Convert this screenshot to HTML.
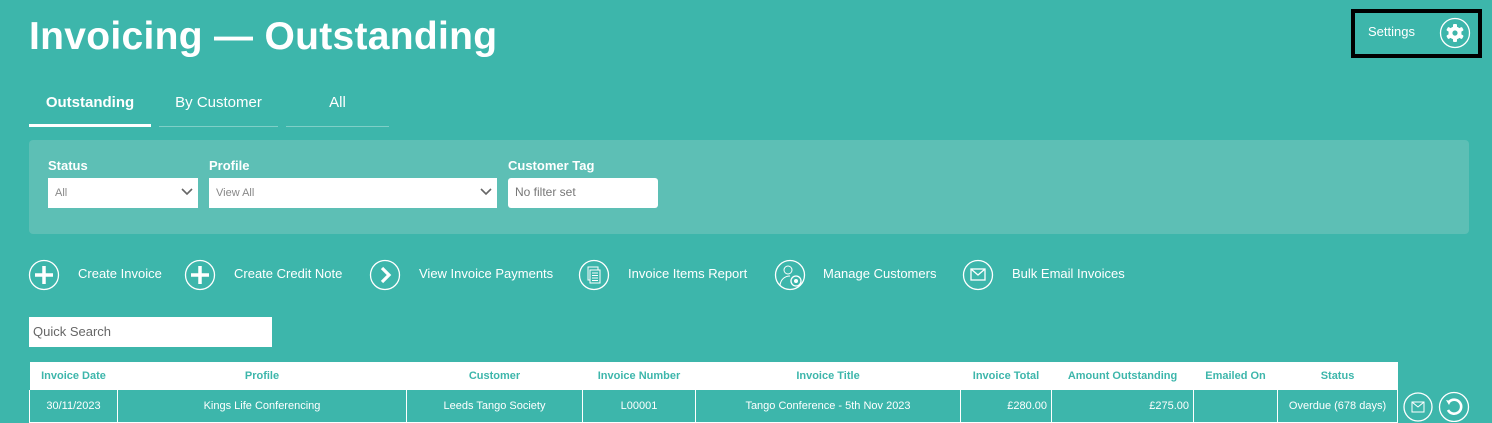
<!DOCTYPE html>
<html><head><meta charset="utf-8"><style>
*{box-sizing:border-box;margin:0;padding:0}
body{width:1492px;height:422px;overflow:hidden;background:#3db6ab;font-family:"Liberation Sans",sans-serif;color:#fff;position:relative}
.a{position:absolute}
h1{position:absolute;left:29px;top:15px;font-size:39px;font-weight:bold;letter-spacing:0.3px;color:#fff}
.tab{position:absolute;top:94px;font-size:15px;text-align:center;height:33px;border-bottom:1px solid #7fcfc7}
.panel{position:absolute;left:29px;top:140px;width:1440px;height:94px;background:#5dbfb5;border-radius:4px}
.lbl{position:absolute;top:158px;font-size:13px;font-weight:bold}
.sel{position:absolute;top:178px;height:30px;background:#fff;color:#888;font-size:11px;padding:9px 7px}
.sel svg{position:absolute;right:5px;top:10px}
.act{position:absolute;top:259px;height:30px;font-size:13px;line-height:30px}
.act svg{position:absolute;left:0;top:0}
.act span{position:absolute;white-space:nowrap}
table{position:absolute;left:29px;top:362px;border-collapse:collapse;font-size:11px}
th{background:#fff;color:#3db6ab;height:28px;font-weight:bold;border:none}
td{height:32px;border:1px solid #fff;border-top:none;text-align:center;padding:0 4px}
</style></head><body>
<h1>Invoicing — Outstanding</h1>
<div class="a" style="left:1351px;top:9px;width:131px;height:49px;border:4px solid #000"></div>
<div class="a" style="left:1368px;top:24px;font-size:13px">Settings</div>
<svg class="a" style="left:1439px;top:17px" width="32" height="32" viewBox="0 0 32 32"><circle cx="16" cy="16" r="14.5" fill="none" stroke="#fff" stroke-width="1.3"/><g fill="#fff"><circle cx="16" cy="16" r="6.5"/><rect x="14" y="7" width="4" height="18" rx="1"/><rect x="14" y="7" width="4" height="18" rx="1" transform="rotate(60 16 16)"/><rect x="14" y="7" width="4" height="18" rx="1" transform="rotate(120 16 16)"/></g><circle cx="16" cy="16" r="2.6" fill="#3db6ab"/></svg>

<div class="tab" style="left:29px;width:122px;font-weight:bold;border-bottom:3px solid #fff">Outstanding</div>
<div class="tab" style="left:159px;width:119px">By Customer</div>
<div class="tab" style="left:286px;width:103px">All</div>

<div class="panel"></div>
<div class="lbl" style="left:48px">Status</div>
<div class="lbl" style="left:209px">Profile</div>
<div class="lbl" style="left:508px">Customer Tag</div>
<div class="sel" style="left:48px;width:150px">All<svg width="12" height="8"><path d="M1 1l5 5 5-5" stroke="#666" stroke-width="1.6" fill="none"/></svg></div>
<div class="sel" style="left:209px;width:288px">View All<svg width="12" height="8"><path d="M1 1l5 5 5-5" stroke="#666" stroke-width="1.6" fill="none"/></svg></div>
<div class="sel" style="left:508px;width:150px;border-radius:3px;font-size:12px;color:#777;padding-top:7px">No filter set</div>

<div class="act" style="left:28px"><svg width="32" height="32"><circle cx="16" cy="16" r="14.5" fill="none" stroke="#fff" stroke-width="1.3"/><path d="M16 7v18M7 16h18" stroke="#fff" stroke-width="3.5"/></svg><span style="left:50px">Create Invoice</span></div>
<div class="act" style="left:184px"><svg width="32" height="32"><circle cx="16" cy="16" r="14.5" fill="none" stroke="#fff" stroke-width="1.3"/><path d="M16 7v18M7 16h18" stroke="#fff" stroke-width="3.5"/></svg><span style="left:50px">Create Credit Note</span></div>
<div class="act" style="left:369px"><svg width="32" height="32"><circle cx="16" cy="16" r="14.5" fill="none" stroke="#fff" stroke-width="1.3"/><path d="M13 9l7 7-7 7" stroke="#fff" stroke-width="3.2" fill="none"/></svg><span style="left:50px">View Invoice Payments</span></div>
<div class="act" style="left:578px"><svg width="32" height="32"><circle cx="16" cy="16" r="14.5" fill="none" stroke="#fff" stroke-width="1.3"/><rect x="10" y="8" width="10" height="13" fill="none" stroke="#fff"/><rect x="12" y="11" width="10" height="13" fill="#3db6ab" stroke="#fff"/><path d="M14 14h6M14 16.5h6M14 19h6M14 21.5h6" stroke="#fff"/></svg><span style="left:50px">Invoice Items Report</span></div>
<div class="act" style="left:774px"><svg width="32" height="32"><circle cx="16" cy="16" r="14.5" fill="none" stroke="#fff" stroke-width="1.3"/><circle cx="14" cy="11" r="4" fill="none" stroke="#fff"/><path d="M6 26c1-6 5-9 10-9" fill="none" stroke="#fff"/><circle cx="22" cy="22" r="5" fill="#3db6ab" stroke="#fff" stroke-width="1.3"/><circle cx="22" cy="22" r="2" fill="#fff"/></svg><span style="left:49px">Manage Customers</span></div>
<div class="act" style="left:962px"><svg width="32" height="32"><circle cx="16" cy="16" r="14.5" fill="none" stroke="#fff" stroke-width="1.3"/><rect x="9" y="10" width="14" height="11" fill="none" stroke="#fff" stroke-width="1.3"/><path d="M9 10l7 6 7-6" fill="none" stroke="#fff" stroke-width="1.3"/></svg><span style="left:50px">Bulk Email Invoices</span></div>

<div class="a" style="left:29px;top:317px;width:243px;height:30px;background:#fff;color:#666;font-size:13px;padding:7px 4px">Quick Search</div>

<table>
<tr><th style="width:88px">Invoice Date</th><th style="width:289px">Profile</th><th style="width:176px">Customer</th><th style="width:113px">Invoice Number</th><th style="width:265px">Invoice Title</th><th style="width:91px">Invoice Total</th><th style="width:142px">Amount Outstanding</th><th style="width:84px">Emailed On</th><th style="width:120px">Status</th></tr>
<tr><td>30/11/2023</td><td>Kings Life Conferencing</td><td>Leeds Tango Society</td><td>L00001</td><td>Tango Conference - 5th Nov 2023</td><td style="text-align:right">£280.00</td><td style="text-align:right">£275.00</td><td></td><td>Overdue (678 days)</td></tr>
</table>
<svg class="a" style="left:1403px;top:392px" width="32" height="30"><circle cx="15" cy="15" r="14" fill="none" stroke="#fff" stroke-width="1.3"/><rect x="9" y="10" width="12" height="10" fill="none" stroke="#fff"/><path d="M9 10l6 5 6-5" fill="none" stroke="#fff"/></svg>
<svg class="a" style="left:1438px;top:391px" width="32" height="31"><circle cx="16" cy="16" r="14.5" fill="none" stroke="#fff" stroke-width="1.3"/><path d="M11 11a7 7 0 1 1 -1 8" fill="none" stroke="#fff" stroke-width="2.6"/><path d="M8 9l5 1-2 4z" fill="#fff"/></svg>
</body></html>
